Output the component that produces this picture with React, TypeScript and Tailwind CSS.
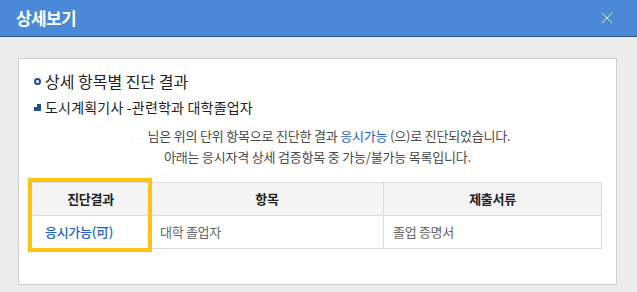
import { X } from 'lucide-react';

const rows = [{ result: '응시가능(可)', item: '대학 졸업자', doc: '졸업 증명서' }];

export default function App() {
  return (
    <div
      className="w-[637px] h-[292px] bg-[#ececec] overflow-hidden"
      style={{ fontFamily: '"Noto Sans CJK KR", "Noto Sans", sans-serif' }}
    >
      <header className="h-[37px] bg-[#4a88d8] border-b border-[#2f5a8e] flex items-center justify-between pl-4 pr-[20px]">
        <h1 className="text-[17px] font-bold text-white tracking-[-0.6px]">상세보기</h1>
        <X className="w-[20px] h-[20px] text-white" strokeWidth={1} />
      </header>

      <div className="pl-[18px] pt-[21px] pr-[20px]">
        <div className="bg-white border border-[#cfcfcf] h-[227px] px-[11px] pt-[10px]">
          <h2 className="flex items-center gap-[4px] pl-[4px] text-[16px] text-[#222] h-[24px]">
            <span className="w-[7px] h-[7px] rounded-full border-2 border-[#1d4f91] inline-block" />
            상세 항목별 진단 결과
          </h2>
          <h3 className="flex items-center gap-[4px] pl-[4px] mt-[3px] text-[14px] text-[#222] tracking-[0.2px] h-[22px]">
            <span className="relative w-[7px] h-[7px] bg-[#1d4f91] inline-block">
              <span className="absolute left-0 top-0 w-[3px] h-[3px] bg-white" />
            </span>
            도시계획기사 -관련학과 대학졸업자
          </h3>

          <div className="mt-[8px] text-center text-[13px] text-[#4a4a4a] leading-[19px] tracking-[-0.2px]">
            <p>
              <span className="inline-block w-[22px] mr-[1px] text-[#ddd] align-middle text-[8px]">· ·</span>
              님은 위의 단위 항목으로 진단한 결과 <span className="text-[#1f5fc7]">응시가능</span> (으)로 진단되었습니다.
            </p>
            <p>아래는 응시자격 상세 검증항목 중 가능/불가능 목록입니다.</p>
          </div>

          <div className="relative mt-[16px]">
            <table className="w-[572px] border-collapse text-[13px] tracking-[-0.3px]">
              <thead>
                <tr className="bg-[#f4f4f4] h-[33px]">
                  <th className="w-[120px] border border-[#dcdcdc] font-bold text-[#222]">진단결과</th>
                  <th className="w-[233px] border border-[#dcdcdc] font-bold text-[#222]">항목</th>
                  <th className="border border-[#dcdcdc] font-bold text-[#222]">제출서류</th>
                </tr>
              </thead>
              <tbody>
                {rows.map((r) => (
                  <tr key={r.item} className="h-[33px]">
                    <td className="border border-[#dcdcdc] px-[14px] text-[#1f5fc7] font-medium">{r.result}</td>
                    <td className="border border-[#dcdcdc] px-[9px] text-[#666]">{r.item}</td>
                    <td className="border border-[#dcdcdc] px-[9px] text-[#666]">{r.doc}</td>
                  </tr>
                ))}
              </tbody>
            </table>
            <div className="absolute left-[-2px] top-[-4px] w-[124px] h-[74px] border-4 border-[#ffc20e] pointer-events-none" />
          </div>
        </div>
      </div>
    </div>
  );
}
